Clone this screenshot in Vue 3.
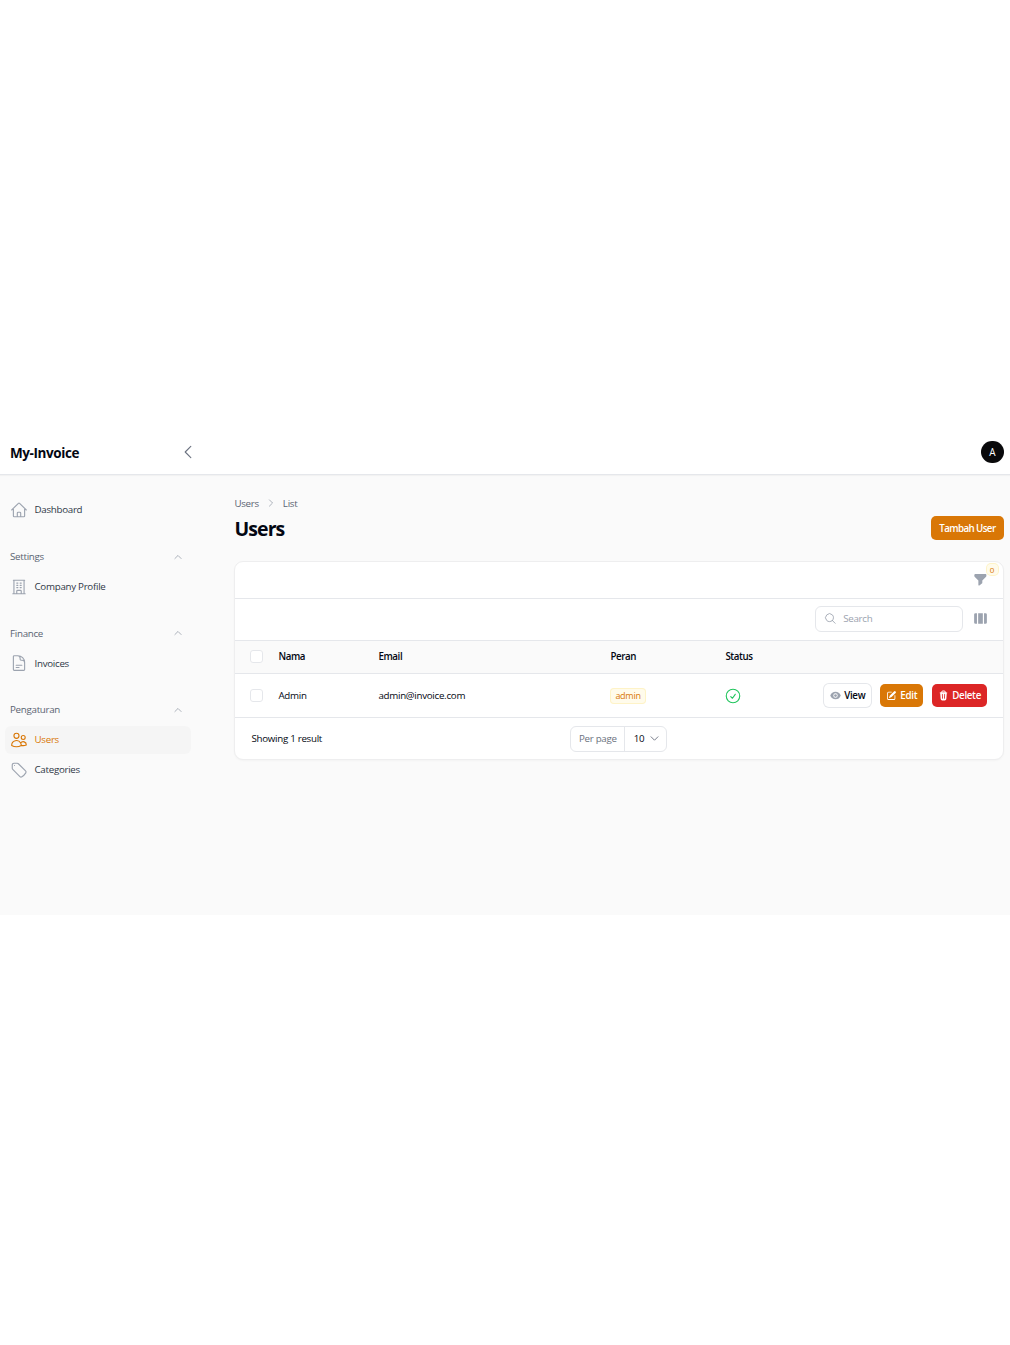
<script setup>
import { ref } from 'vue'

const kolom = ['Nama', 'Email', 'Peran', 'Status']
const users = ref([
  { id: 1, nama: 'Admin', email: 'admin@invoice.com', peran: 'admin' }
])
</script>

<template>
  <div class="wrap">
    <div class="page">
      <header class="topbar">
        <div class="brand">My-Invoice</div>
        <button class="collapse" aria-label="collapse">
          <svg width="18" height="18" viewBox="0 0 24 24" fill="none" stroke="#6b7280" stroke-width="1.5" stroke-linecap="round" stroke-linejoin="round"><path d="M15.75 19.5 8.25 12l7.5-7.5" /></svg>
        </button>
        <div class="avatar">A</div>
      </header>

      <div class="body">
        <aside class="sidebar">
          <a class="item first">
            <svg class="ico" viewBox="0 0 24 24" fill="none" stroke="#9ca3af" stroke-width="1.5" stroke-linecap="round" stroke-linejoin="round"><path d="m2.25 12 8.954-8.955c.44-.439 1.152-.439 1.591 0L21.75 12M4.5 9.75v10.125c0 .621.504 1.125 1.125 1.125H9.75v-4.875c0-.621.504-1.125 1.125-1.125h2.25c.621 0 1.125.504 1.125 1.125V21h4.125c.621 0 1.125-.504 1.125-1.125V9.75M8.25 21h8.25" /></svg>
            <span>Dashboard</span>
          </a>

          <div class="group">
            <div class="group-label">
              <span>Settings</span>
              <svg width="10" height="10" viewBox="0 0 24 24" fill="none" stroke="#9ca3af" stroke-width="2" stroke-linecap="round" stroke-linejoin="round"><path d="m4.5 15.75 7.5-7.5 7.5 7.5" /></svg>
            </div>
            <a class="item">
              <svg class="ico" viewBox="0 0 24 24" fill="none" stroke="#9ca3af" stroke-width="1.5" stroke-linecap="round" stroke-linejoin="round"><path d="M3.75 21h16.5M4.5 3h15M5.25 3v18m13.5-18v18M9 6.75h1.5m-1.5 3h1.5m-1.5 3h1.5m3-6H15m-1.5 3H15m-1.5 3H15M9 21v-3.375c0-.621.504-1.125 1.125-1.125h3.75c.621 0 1.125.504 1.125 1.125V21" /></svg>
              <span>Company Profile</span>
            </a>
          </div>

          <div class="group">
            <div class="group-label">
              <span>Finance</span>
              <svg width="10" height="10" viewBox="0 0 24 24" fill="none" stroke="#9ca3af" stroke-width="2" stroke-linecap="round" stroke-linejoin="round"><path d="m4.5 15.75 7.5-7.5 7.5 7.5" /></svg>
            </div>
            <a class="item">
              <svg class="ico" viewBox="0 0 24 24" fill="none" stroke="#9ca3af" stroke-width="1.5" stroke-linecap="round" stroke-linejoin="round"><path d="M19.5 14.25v-2.625a3.375 3.375 0 0 0-3.375-3.375h-1.5A1.125 1.125 0 0 1 13.5 7.125v-1.5a3.375 3.375 0 0 0-3.375-3.375H8.25m0 12.75h7.5m-7.5 3H12M10.5 2.25H5.625c-.621 0-1.125.504-1.125 1.125v17.25c0 .621.504 1.125 1.125 1.125h12.75c.621 0 1.125-.504 1.125-1.125V11.25a9 9 0 0 0-9-9Z" /></svg>
              <span>Invoices</span>
            </a>
          </div>

          <div class="group">
            <div class="group-label">
              <span>Pengaturan</span>
              <svg width="10" height="10" viewBox="0 0 24 24" fill="none" stroke="#9ca3af" stroke-width="2" stroke-linecap="round" stroke-linejoin="round"><path d="m4.5 15.75 7.5-7.5 7.5 7.5" /></svg>
            </div>
            <a class="item active">
              <svg class="ico" viewBox="0 0 24 24" fill="none" stroke="#d97706" stroke-width="1.5" stroke-linecap="round" stroke-linejoin="round"><path d="M15 19.128a9.38 9.38 0 0 0 2.625.372 9.337 9.337 0 0 0 4.121-.952 4.125 4.125 0 0 0-7.533-2.493M15 19.128v-.003c0-1.113-.285-2.16-.786-3.07M15 19.128v.106A12.318 12.318 0 0 1 8.624 21c-2.331 0-4.512-.645-6.374-1.766l-.001-.109a6.375 6.375 0 0 1 11.964-3.07M12 6.375a3.375 3.375 0 1 1-6.75 0 3.375 3.375 0 0 1 6.75 0Zm8.25 2.25a2.625 2.625 0 1 1-5.25 0 2.625 2.625 0 0 1 5.25 0Z" /></svg>
              <span>Users</span>
            </a>
            <a class="item">
              <svg class="ico" viewBox="0 0 24 24" fill="none" stroke="#9ca3af" stroke-width="1.5" stroke-linecap="round" stroke-linejoin="round"><path d="M9.568 3H5.25A2.25 2.25 0 0 0 3 5.25v4.318c0 .597.237 1.17.659 1.591l9.581 9.581c.699.699 1.78.872 2.607.33a18.095 18.095 0 0 0 5.223-5.223c.542-.827.369-1.908-.33-2.607L11.16 3.66A2.25 2.25 0 0 0 9.568 3Z" /><path d="M6 6h.008v.008H6V6Z" /></svg>
              <span>Categories</span>
            </a>
          </div>
        </aside>

        <main class="main">
          <nav class="crumbs">
            <span>Users</span>
            <svg width="10" height="10" viewBox="0 0 24 24" fill="none" stroke="#9ca3af" stroke-width="2" stroke-linecap="round" stroke-linejoin="round"><path d="m8.25 4.5 7.5 7.5-7.5 7.5" /></svg>
            <span>List</span>
          </nav>
          <div class="heading">
            <h1>Users</h1>
            <button class="btn primary add">Tambah User</button>
          </div>

          <section class="card">
            <div class="filter-row">
              <div class="filter">
                <svg width="15" height="15" viewBox="0 0 24 24" fill="#9ca3af"><path d="M3.8 3h16.4c.7 0 1.2.6 1.2 1.2v2.2c0 .4-.2.8-.5 1.1l-6 6.2v3.4c0 .5-.3.9-.7 1.1l-4 3.3c-.7.4-1.6-.1-1.6-.9v-6.9l-6-6.2c-.3-.3-.5-.7-.5-1.1V4.2C2.600 3.600 3.100 3 3.800 3Z" /></svg>
                <span class="count">0</span>
              </div>
            </div>

            <div class="search-row">
              <label class="search">
                <svg width="15" height="15" viewBox="0 0 24 24" fill="none" stroke="#9ca3af" stroke-width="1.6" stroke-linecap="round" stroke-linejoin="round"><path d="m21 21-5.197-5.197m0 0A7.5 7.5 0 1 0 5.196 5.196a7.5 7.500 0 0 0 10.607 10.607Z" /></svg>
                <input type="text" placeholder="Search" />
              </label>
              <svg class="cols" width="17" height="17" viewBox="0 0 24 24" fill="#9ca3af"><path d="M3 6.500A2 2 0 0 1 5 4.500h2v15H5a2 2 0 0 1-2-2v-11ZM8.700 4.500h6.600v15H8.700v-15ZM17 4.500h2a2 2 0 0 1 2 2v11a2 2 0 0 1-2 2h-2v-15Z" /></svg>
            </div>

            <table>
              <colgroup>
                <col class="c-check" />
                <col class="c-nama" />
                <col class="c-email" />
                <col class="c-peran" />
                <col class="c-status" />
                <col />
              </colgroup>
              <thead>
                <tr>
                  <th><span class="check"></span></th>
                  <th v-for="k in kolom" :key="k">{{ k }}</th>
                  <th></th>
                </tr>
              </thead>
              <tbody>
                <tr v-for="u in users" :key="u.id">
                  <td><span class="check"></span></td>
                  <td>{{ u.nama }}</td>
                  <td>{{ u.email }}</td>
                  <td><span class="badge">{{ u.peran }}</span></td>
                  <td>
                    <svg class="status" width="18" height="18" viewBox="0 0 24 24" fill="none" stroke="#22c55e" stroke-width="1.5" stroke-linecap="round" stroke-linejoin="round"><path d="M9 12.750 11.250 15 15 9.750" /><circle cx="12" cy="12" r="9" /></svg>
                  </td>
                  <td>
                    <div class="actions">
                      <button class="btn light">
                        <svg width="11" height="11" viewBox="0 0 20 20" fill="#9ca3af"><path d="M10 12.500a2.500 2.500 0 1 0 0-5 2.500 2.500 0 0 0 0 5Z" /><path fill-rule="evenodd" clip-rule="evenodd" d="M.664 10.590a1.651 1.651 0 0 1 0-1.186A10.004 10.004 0 0 1 10 3c4.257 0 7.893 2.660 9.336 6.410.147.381.146.804 0 1.186A10.004 10.004 0 0 1 10 17c-4.257 0-7.893-2.660-9.336-6.410ZM14 10a4 4 0 1 1-8 0 4 4 0 0 1 8 0Z" /></svg>
                        View
                      </button>
                      <button class="btn primary">
                        <svg width="11" height="11" viewBox="0 0 20 20" fill="#fff"><path d="m5.433 13.917 1.262-3.155A4 4 0 0 1 7.580 9.420l6.920-6.918a2.121 2.121 0 0 1 3 3l-6.920 6.918c-.383.383-.84.685-1.343.886l-3.154 1.262a.500.500 0 0 1-.65-.65Z" /><path d="M3.500 5.750c0-.69.560-1.250 1.250-1.250H10A.750.750 0 0 0 10 3H4.750A2.750 2.750 0 0 0 2 5.750v9.500A2.750 2.750 0 0 0 4.750 18h9.500A2.750 2.750 0 0 0 17 15.250V10a.750.750 0 0 0-1.500 0v5.250c0 .69-.560 1.250-1.250 1.250h-9.500c-.69 0-1.250-.560-1.250-1.250v-9.500Z" /></svg>
                        Edit
                      </button>
                      <button class="btn danger">
                        <svg width="11" height="11" viewBox="0 0 20 20" fill="#fff"><path fill-rule="evenodd" clip-rule="evenodd" d="M8.750 1A2.750 2.750 0 0 0 6 3.750v.443c-.795.077-1.584.176-2.365.298a.750.750 0 1 0 .23 1.482l.149-.022.841 10.518A2.750 2.750 0 0 0 7.596 19h4.807a2.750 2.750 0 0 0 2.742-2.530l.841-10.520.149.023a.750.750 0 0 0 .23-1.482A41.030 41.030 0 0 0 14 4.193V3.750A2.750 2.750 0 0 0 11.250 1h-2.500ZM10 4c.84 0 1.673.025 2.500.075V3.750c0-.69-.560-1.250-1.250-1.250h-2.500c-.69 0-1.250.560-1.250 1.250v.325C8.327 4.025 9.160 4 10 4ZM8.580 7.720a.750.750 0 0 0-1.500.060l.3 7.500a.750.750 0 1 0 1.500-.060l-.3-7.500Zm4.340.060a.750.750 0 1 0-1.500-.060l-.3 7.500a.750.750 0 1 0 1.500.060l.3-7.500Z" /></svg>
                        Delete
                      </button>
                    </div>
                  </td>
                </tr>
              </tbody>
            </table>

            <div class="footer">
              <span class="result">Showing 1 result</span>
              <div class="perpage">
                <span class="pp-label">Per page</span>
                <span class="pp-value">
                  10
                  <svg width="11" height="11" viewBox="0 0 24 24" fill="none" stroke="#6b7280" stroke-width="2" stroke-linecap="round" stroke-linejoin="round"><path d="m19.500 8.250-7.500 7.500-7.500-7.500" /></svg>
                </span>
              </div>
            </div>
          </section>
        </main>
      </div>
    </div>
  </div>
</template>

<style>
html, body {
  background: #fff;
}
</style>

<style scoped>
.wrap {
  min-height: 100vh;
  display: flex;
  align-items: center;
  font-family: "Open Sans", "Noto Sans", sans-serif;
  font-size: 9.75px;
  letter-spacing: -0.28px;
  color: #030712;
}

.page {
  width: 100%;
  height: 485px;
  background: #fafafa;
  display: flex;
  flex-direction: column;
}

.topbar {
  height: 45px;
  flex: none;
  box-sizing: border-box;
  background: #fff;
  border-bottom: 1px solid #e5e7eb;
  box-shadow: 0 1px 1px rgba(0, 0, 0, 0.03);
  display: flex;
  align-items: center;
  padding: 0 6.5px 0 10px;
}

.brand {
  font-size: 13.5px;
  font-weight: 700;
  width: 168.5px;
  letter-spacing: -0.4px;
  padding-top: 1px;
}

.collapse {
  border: none;
  background: none;
  padding: 0;
  display: flex;
}

.avatar {
  margin-left: auto;
  width: 22.5px;
  height: 22.5px;
  border-radius: 50%;
  background: #09090b;
  color: #fff;
  font-size: 10px;
  font-weight: 500;
  display: flex;
  align-items: center;
  justify-content: center;
}

.body {
  flex: 1;
  display: flex;
}

.sidebar {
  width: 191px;
  flex: none;
  padding: 20.5px 0 0 5px;
  box-sizing: border-box;
}

.item {
  height: 28px;
  display: flex;
  align-items: center;
  gap: 7px;
  padding: 0 4.5px;
  border-radius: 6px;
  color: #2f3847;
  font-weight: 500;
  margin-bottom: 2px;
}

.item.first {
  margin-bottom: 0;
}

.item.active {
  background: #f5f5f5;
  color: #d97706;
}

.ico {
  width: 18px;
  height: 18px;
  flex: none;
}

.group {
  margin-top: 24px;
}

.group + .group {
  margin-top: 23.5px;
}

.group-label {
  height: 18px;
  display: flex;
  align-items: center;
  justify-content: space-between;
  padding: 0 8px 0 5px;
  color: #5b6472;
  font-weight: 500;
  margin-bottom: 7px;
}

.main {
  flex: 1;
  min-width: 0;
  padding: 20.5px 6.5px 0 43.4px;
}

.crumbs {
  display: flex;
  align-items: center;
  height: 15px;
  color: #5b6472;
  font-weight: 500;
  gap: 7px;
}

.heading {
  display: flex;
  align-items: center;
  justify-content: space-between;
  margin-top: 2.5px;
  height: 30px;
}

h1 {
  margin: 0;
  font-size: 19.5px;
  font-weight: 700;
  letter-spacing: -0.9px;
}

.btn {
  display: inline-flex;
  align-items: center;
  gap: 3px;
  height: 23px;
  padding: 0 6px;
  border: none;
  border-radius: 5px;
  font-family: inherit;
  font-size: 9.75px;
  font-weight: 600;
  letter-spacing: -0.3px;
}

.primary {
  background: #d97706;
  color: #fff;
}

.danger {
  background: #dc2626;
  color: #fff;
}

.light {
  background: #fff;
  color: #030712;
  box-shadow: 0 0 0 1px #e5e7eb;
}

.add {
  height: 24px;
  padding: 0 8px;
  letter-spacing: -0.6px;
}

.card {
  margin-top: 18px;
  background: #fff;
  border: 1px solid #eeeeef;
  border-radius: 9px;
  overflow: hidden;
  box-shadow: 0 1px 2px rgba(0, 0, 0, 0.03);
}

.filter-row {
  height: 36px;
  border-bottom: 1px solid #e5e7eb;
  display: flex;
  align-items: center;
  justify-content: flex-end;
  padding-right: 15px;
}

.filter {
  position: relative;
  display: flex;
  top: -1px;
}

.count {
  position: absolute;
  top: -8px;
  right: -10px;
  width: 11px;
  height: 11px;
  border-radius: 4px;
  background: #fffbeb;
  box-shadow: 0 0 0 1px #fef3c7;
  color: #d97706;
  font-size: 8px;
  line-height: 11px;
  text-align: center;
}

.search-row {
  height: 41px;
  box-sizing: border-box;
  padding-bottom: 2px;
  display: flex;
  align-items: center;
  justify-content: flex-end;
  gap: 9px;
  padding-right: 14px;
}

.search {
  width: 148px;
  height: 26px;
  box-sizing: border-box;
  border: 1px solid #e5e7eb;
  border-radius: 6px;
  display: flex;
  align-items: center;
  gap: 7px;
  padding: 0 8px;
}

.search input {
  border: none;
  outline: none;
  background: none;
  width: 100%;
  font-family: inherit;
  font-size: 9.75px;
  letter-spacing: inherit;
  padding: 0;
}

.search input::placeholder {
  color: #9ca3af;
}

.cols {
  flex: none;
}

table {
  width: 100%;
  border-collapse: collapse;
  table-layout: fixed;
}

.c-check {
  width: 43px;
}

.c-nama {
  width: 100px;
}

.c-email {
  width: 232px;
}

.c-peran {
  width: 115px;
}

.c-status {
  width: 90px;
}

th, td {
  padding: 0;
  text-align: left;
  font-size: 9.75px;
}

th {
  height: 33px;
  padding-bottom: 1px;
  box-sizing: border-box;
  background: #fafafa;
  border-top: 1px solid #e5e7eb;
  border-bottom: 1px solid #e5e7eb;
  font-weight: 600;
  letter-spacing: -0.4px;
}

td {
  height: 43px;
  border-bottom: 1px solid #e5e7eb;
  font-weight: 450;
}

th:first-child, td:first-child {
  padding-left: 15px;
}

.check {
  display: block;
  width: 13px;
  height: 13px;
  box-sizing: border-box;
  border: 1px solid #e5e7eb;
  border-radius: 3px;
  background: #fff;
}

.badge {
  display: inline-block;
  padding: 0 5px;
  height: 16px;
  line-height: 15px;
  box-sizing: border-box;
  border-radius: 4px;
  background: #fffbeb;
  box-shadow: 0 0 0 1px #fef3c7 inset;
  color: #d97706;
  font-size: 9px;
  font-weight: 500;
}

.status {
  display: block;
  margin-left: -1px;
}

.actions {
  display: flex;
  justify-content: flex-end;
  gap: 9px;
  padding-right: 15.5px;
}

.footer {
  height: 41px;
  display: flex;
  align-items: center;
  padding-left: 16px;
  position: relative;
}

.result {
  width: 319px;
  font-weight: 500;
}

.perpage {
  display: flex;
  align-items: center;
  height: 26px;
  box-sizing: border-box;
  border: 1px solid #e5e7eb;
  border-radius: 6px;
}

.pp-label {
  padding: 0 7.5px;
  line-height: 24px;
  color: #6b7280;
  border-right: 1px solid #e5e7eb;
}

.pp-value {
  display: flex;
  align-items: center;
  gap: 5px;
  padding: 0 5.5px 0 8.5px;
}
</style>
